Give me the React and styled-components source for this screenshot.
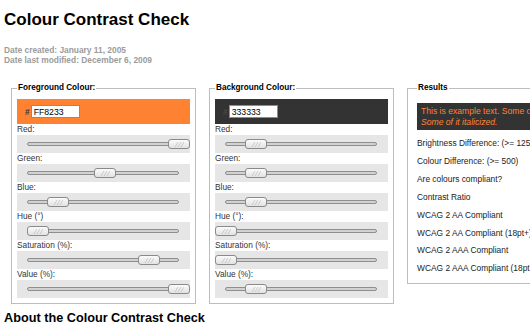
import React from 'react'
import styled, { createGlobalStyle } from 'styled-components'

const GlobalStyle = createGlobalStyle`
html, body {
  margin: 0;
  padding: 0;
  overflow: hidden;
  background: #fff;
  font-family: "Liberation Sans", Arial, sans-serif;
}
`

const Page = styled.main`
padding: 10px 0 0 4px;
width: 700px;
`

const Title = styled.h1`
margin: 0;
font-size: 17px;
line-height: 20px;
font-weight: 700;
color: #000;
`

const Dates = styled.div`
margin-top: 15px;
font-size: 8.4px;
line-height: 10px;
font-weight: 700;
color: #9c9c9c;
`

const Panels = styled.div`
display: flex;
align-items: flex-start;
gap: 13px;
margin: 18px 0 0 7px;
`

const Panel = styled.fieldset`
flex: 0 0 auto;
box-sizing: border-box;
width: 185px;
margin: 0;
padding: 6px 5px 5px 5px;
border: 1px solid #bdbdbd;
min-width: 0;

&.results {
  padding: 10px 9px 5px 9px;
}
`

const Legend = styled.legend`
padding: 0 1px;
font-size: 8.2px;
line-height: 10px;
font-weight: 700;
color: #000;
`

const Swatch = styled.div`
display: flex;
align-items: center;
gap: 1px;
height: 25px;
padding-left: 8px;
background: ${(p) => p.$colour};
`

const Hash = styled.span`
font-size: 8.4px;
font-weight: 700;
color: ${(p) => p.$ink};
`

const HexInput = styled.input`
box-sizing: border-box;
width: 49px;
height: 13px;
margin: 0;
padding: 0 2px;
border: 1px solid #8c8c8c;
background: #fff;
font-family: "Liberation Sans", Arial, sans-serif;
font-size: 8.7px;
color: #000;
outline: none;
`

const Label = styled.div`
font-size: 8.3px;
line-height: 11px;
color: #333;
`

const SliderRow = styled.div`
position: relative;
height: 18px;
background: #e6e6e6;
`

const Track = styled.div`
position: absolute;
left: 10px;
right: 11px;
top: 7px;
height: 4px;
box-sizing: border-box;
border: 1px solid #8e8e8e;
border-radius: 2px;
background: #d2d2d2;
`

const Thumb = styled.div`
position: absolute;
top: 4px;
width: 22px;
height: 10px;
box-sizing: border-box;
border: 1px solid #8a8a8a;
border-radius: 3px;
background: linear-gradient(#fbfbfb, #e2e2e2);
display: flex;
align-items: center;
justify-content: center;
`

const SampleBox = styled.div`
padding: 3px 4px 2px;
background: #333;
color: #ff8233;
font-size: 8.6px;
line-height: 11px;
white-space: nowrap;
`

const ResultList = styled.div`
margin-top: 5px;
`

const ResultLine = styled.p`
margin: 0;
font-size: 8.4px;
line-height: 17.9px;
color: #222;
white-space: nowrap;
`

const About = styled.h2`
margin: 7px 0 0;
font-size: 12.7px;
line-height: 15px;
font-weight: 700;
color: #000;
`

const Hatch = () => (
  <svg width='10' height='5' viewBox='0 0 10 5'>
    <path d='M1 5 L4 0 M4 5 L7 0 M7 5 L10 0' stroke='#c2c2c2' strokeWidth='0.8' fill='none' />
  </svg>
)

const Slider = ({ label, value }) => (
  <>
    <Label>{label}</Label>
    <SliderRow>
      <Track />
      <Thumb style={{ left: `calc((100% - 22px) * ${value})` }}>
        <Hatch />
      </Thumb>
    </SliderRow>
  </>
)

const colourPanels = [
  {
    title: 'Foreground Colour:',
    hex: 'FF8233',
    colour: '#ff8233',
    ink: '#333',
    values: [1, 130 / 255, 51 / 255, 23 / 360, 0.8, 1],
    hueLabel: 'Hue (°)',
  },
  {
    title: 'Background Colour:',
    hex: '333333',
    colour: '#333333',
    ink: '#4a4a4a',
    values: [0.2, 0.2, 0.2, 0, 0, 0.2],
    hueLabel: 'Hue (°):',
  },
]

const results = [
  'Brightness Difference: (>= 125)',
  'Colour Difference: (>= 500)',
  'Are colours compliant?',
  'Contrast Ratio',
  'WCAG 2 AA Compliant',
  'WCAG 2 AA Compliant (18pt+)',
  'WCAG 2 AAA Compliant',
  'WCAG 2 AAA Compliant (18pt+)',
]

const App = () => {
  return (
    <Page>
      <GlobalStyle />
      <Title>Colour Contrast Check</Title>
      <Dates>
        <div>Date created: January 11, 2005</div>
        <div>Date last modified: December 6, 2009</div>
      </Dates>
      <Panels>
        {colourPanels.map((p) => {
          const labels = ['Red:', 'Green:', 'Blue:', p.hueLabel, 'Saturation (%):', 'Value (%):']
          return (
            <Panel key={p.title}>
              <Legend>{p.title}</Legend>
              <Swatch $colour={p.colour}>
                <Hash $ink={p.ink}>#</Hash>
                <HexInput defaultValue={p.hex} />
              </Swatch>
              {labels.map((l, i) => (
                <Slider key={l} label={l} value={p.values[i]} />
              ))}
            </Panel>
          )
        })}
        <Panel className='results'>
          <Legend>Results</Legend>
          <SampleBox>
            This is example text. Some of it is bold.
            <br />
            <em>Some of it italicized.</em>
          </SampleBox>
          <ResultList>
            {results.map((r) => (
              <ResultLine key={r}>{r}</ResultLine>
            ))}
          </ResultList>
        </Panel>
      </Panels>
      <About>About the Colour Contrast Check</About>
    </Page>
  )
}

export default App
